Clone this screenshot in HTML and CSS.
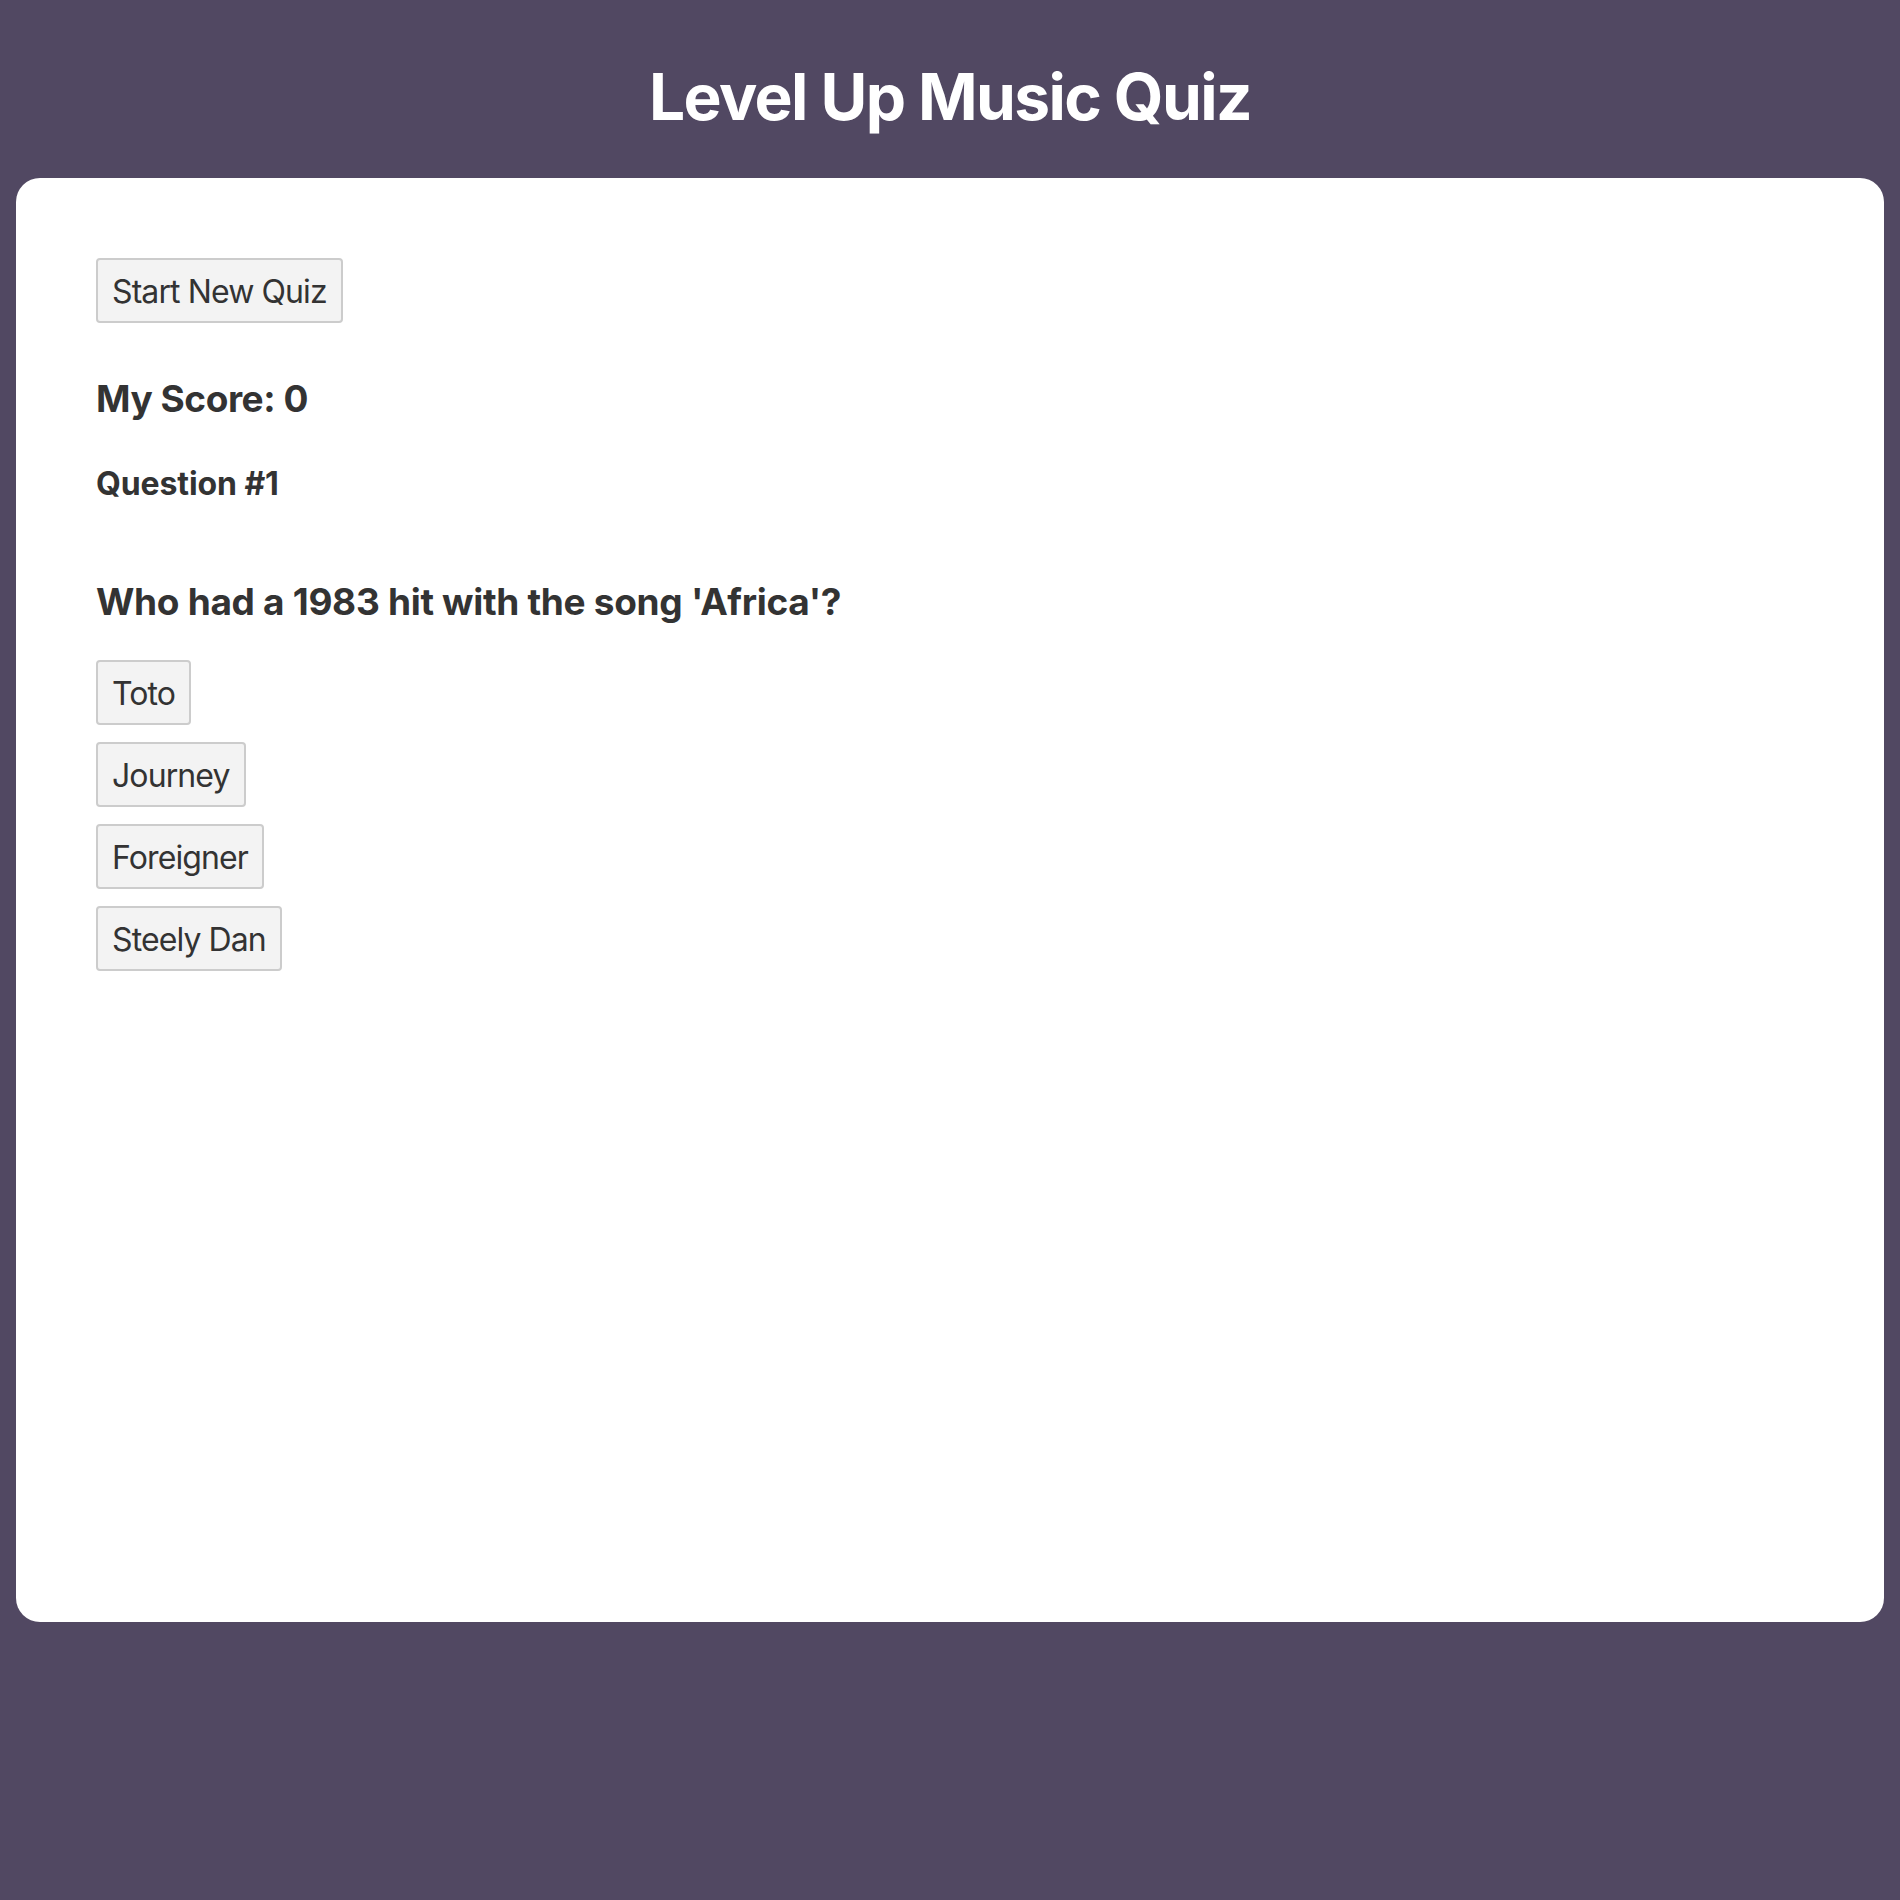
FILE: index.html
```html
<!DOCTYPE html>
<html lang="en">
<head>
<meta charset="utf-8">
<title>Level Up Music Quiz</title>
<link rel="stylesheet" href="styles.css">
</head>
<body>
  <header class="header">
    <h1 class="title">Level Up Music Quiz</h1>
  </header>
  <main class="card">
    <button class="btn btn-start">Start New Quiz</button>
    <h3 class="score">My Score: 0</h3>
    <h4 class="qnum">Question #1</h4>
    <h3 class="question">Who had a 1983 hit with the song 'Africa'?</h3>
    <div class="answers">
      <div><button class="btn">Toto</button></div>
      <div><button class="btn">Journey</button></div>
      <div><button class="btn">Foreigner</button></div>
      <div><button class="btn">Steely Dan</button></div>
    </div>
  </main>
</body>
</html>
```

FILE: styles.css
```css
* { box-sizing: border-box; }

html, body {
  margin: 0;
  padding: 0;
}

body {
  background: #514862;
  font-family: Inter, "Liberation Sans", Arial, sans-serif;
  color: #333333;
  min-height: 1900px;
}

.header {
  padding: 58px 0 42px;
  text-align: center;
}

.title {
  margin: 0;
  font-size: 64px;
  line-height: 78px;
  font-weight: 700;
  color: #ffffff;
  letter-spacing: -1.6px;
}

.card {
  margin: 0 16px;
  height: 1444px;
  background: #ffffff;
  border-radius: 24px;
  padding: 80px;
  display: flex;
  flex-direction: column;
  align-items: flex-start;
}

.btn {
  font-family: Inter, "Liberation Sans", Arial, sans-serif;
  font-size: 32px;
  line-height: 39px;
  font-weight: 400;
  color: #333333;
  background: #f3f3f3;
  border: 2px solid #cccccc;
  border-radius: 4px;
  padding: 12px 14px 10px;
  margin: 0;
  letter-spacing: -0.9px;
  cursor: pointer;
}

.score {
  margin: 53px 0 0;
  font-size: 37px;
  line-height: 45px;
  font-weight: 700;
  letter-spacing: -0.45px;
}

.qnum {
  margin: 43px 0 0;
  font-size: 32px;
  line-height: 39px;
  font-weight: 700;
  letter-spacing: -0.1px;
}

.question {
  margin: 76px 0 0;
  font-size: 37px;
  line-height: 45px;
  font-weight: 700;
  letter-spacing: -0.3px;
}

.answers {
  margin-top: 36px;
  display: flex;
  flex-direction: column;
  gap: 17px;
}
```
